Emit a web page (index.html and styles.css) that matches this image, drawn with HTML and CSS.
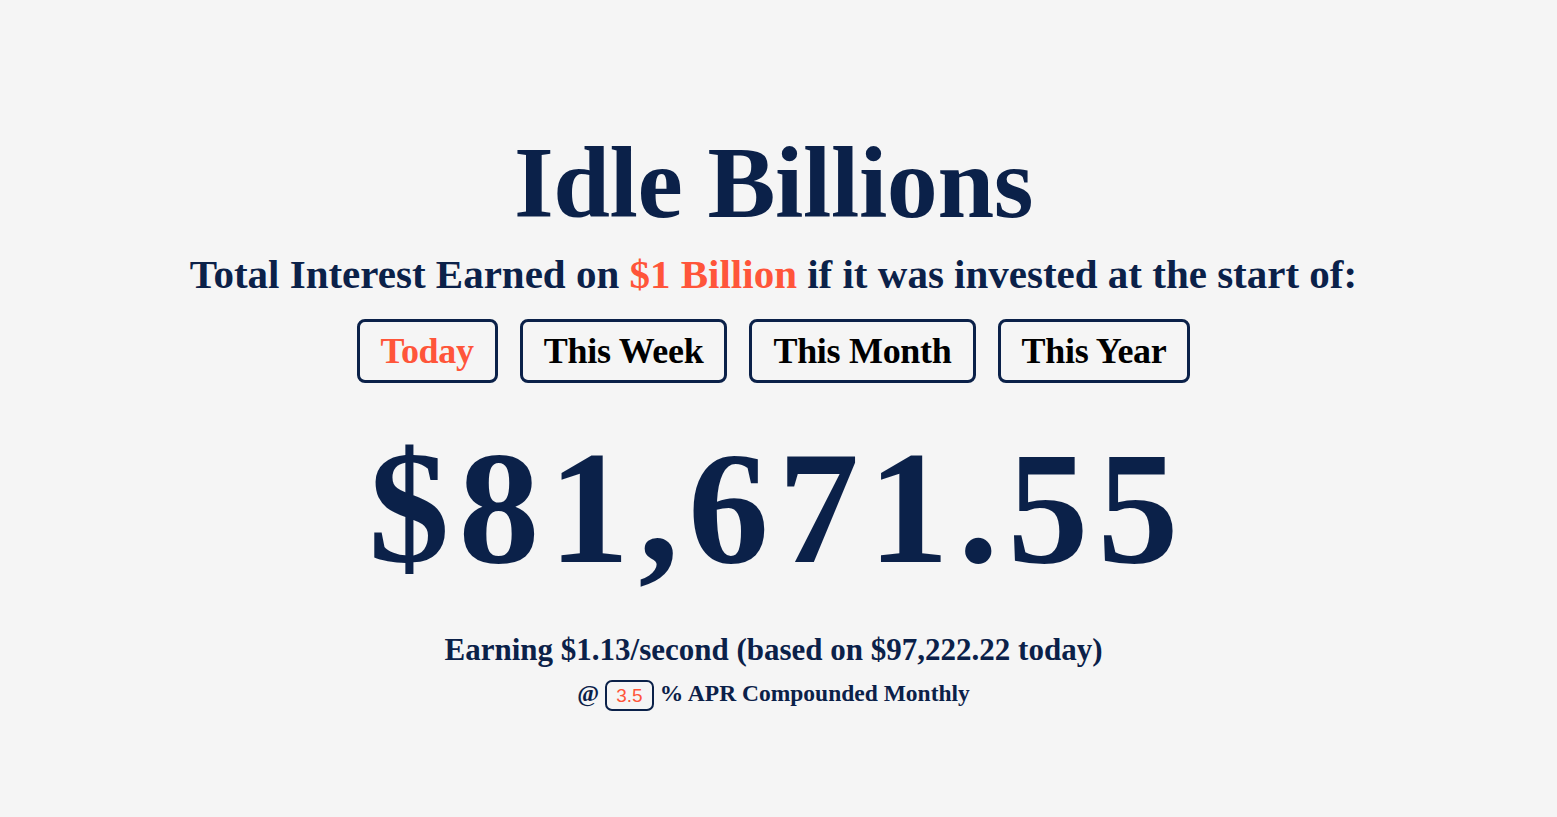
FILE: index.html
```html
<!DOCTYPE html>
<html lang="en">
<head>
    <meta charset="UTF-8">
    <meta name="viewport" content="width=device-width, initial-scale=1.0">
    <title>Idle Billions</title>
    <link rel="stylesheet" href="styles.css">
</head>
<body>
    <main class="container">
        <h1 class="title">Idle Billions</h1>
        <p class="subtitle">Total Interest Earned on <span class="accent">$1 Billion</span> if it was invested at the start of:</p>

        <div class="periods">
            <button class="period active">Today</button>
            <button class="period">This Week</button>
            <button class="period">This Month</button>
            <button class="period">This Year</button>
        </div>

        <div class="total">$81,671.55</div>

        <p class="rate">Earning $1.13/second (based on $97,222.22 today)</p>
        <p class="apr">@ <input class="apr-input" type="text" value="3.5"> % APR Compounded Monthly</p>
    </main>
</body>
</html>
```

FILE: styles.css
```css
body {
    margin: 0;
    padding: 0;
    background-color: #f5f5f5;
    color: #0b2149;
    font-family: "Liberation Serif", "DejaVu Serif", serif;
}

.container {
    display: flex;
    flex-direction: column;
    align-items: center;
    padding-top: 128px;
    padding-right: 10px;
}

.title {
    margin: 0;
    font-size: 102px;
    font-weight: bold;
    line-height: 110px;
    letter-spacing: -0.4px;
}

.subtitle {
    margin: 12px 0 0;
    font-size: 41px;
    font-weight: bold;
    line-height: 48px;
}

.accent {
    color: #ff553a;
}

.periods {
    display: flex;
    gap: 22px;
    margin-top: 21px;
}

.period {
    height: 64px;
    padding: 0 21px;
    border: 3px solid #0b2149;
    border-radius: 8px;
    background: transparent;
    color: #000;
    font-family: "Liberation Serif", "DejaVu Serif", serif;
    font-size: 36px;
    font-weight: bold;
    letter-spacing: -0.3px;
    cursor: pointer;
}

.period.active {
    color: #ff553a;
}

.total {
    margin-top: 30px;
    padding-left: 9px;
    font-size: 162px;
    font-weight: bold;
    line-height: 190px;
    letter-spacing: 9px;
}

.rate {
    margin: 29px 0 0;
    font-size: 31px;
    font-weight: bold;
    line-height: 36px;
}

.apr {
    margin: 8px 0 0;
    font-size: 23.5px;
    font-weight: bold;
    line-height: 34px;
}

.apr-input {
    box-sizing: border-box;
    width: 49px;
    height: 31px;
    padding: 0 4px;
    border: 2px solid #0b2149;
    border-radius: 7px;
    background: transparent;
    color: #ff553a;
    font-family: "Liberation Sans", Arial, sans-serif;
    font-size: 19px;
    text-align: center;
    vertical-align: middle;
}
```
